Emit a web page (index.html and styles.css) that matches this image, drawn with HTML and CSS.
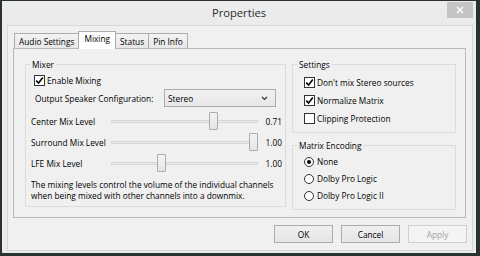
FILE: index.html
```html
<!DOCTYPE html>
<html lang="en">

<head>
    <meta charset="UTF-8">
    <meta name="viewport" content="width=device-width, initial-scale=1.0">
    <link rel="stylesheet" href="styles.css">
    <title>Properties</title>
</head>

<body>
    <div class="window">
        <div class="titlebar">
            <span class="title">Properties</span>
            <span class="close">
                <svg width="8" height="8" viewBox="0 0 8 8">
                    <path d="M1 1 L7 7 M7 1 L1 7" stroke="#fff" stroke-width="1.4" />
                </svg>
            </span>
        </div>
        <div class="client">
            <div class="tabs">
                <div class="tab">Audio Settings</div>
                <div class="tab active">Mixing</div>
                <div class="tab">Status</div>
                <div class="tab">Pin Info</div>
            </div>
            <div class="panel">
                <fieldset class="group mixer">
                    <legend>Mixer</legend>
                    <div class="mixer-body">
                        <label class="check">
                            <span class="box checked">
                                <svg width="9" height="9" viewBox="0 0 9 9">
                                    <path d="M1.2 4.6 L3.6 7 L7.8 1.6" fill="none" stroke="#000" stroke-width="1.6" />
                                </svg>
                            </span>
                            Enable Mixing
                        </label>
                        <div class="config-row">
                            <span>Output Speaker Configuration:</span>
                            <div class="select">
                                <span>Stereo</span>
                                <svg width="7" height="5" viewBox="0 0 7 5">
                                    <path d="M1 1 L3.5 3.5 L6 1" fill="none" stroke="#333" stroke-width="1.2" />
                                </svg>
                            </div>
                        </div>
                        <div class="sliders">
                            <div class="slider-row">
                                <span>Center Mix Level</span>
                                <div class="slider">
                                    <div class="track"></div>
                                    <div class="thumb" style="--pos: 0.71"></div>
                                </div>
                                <span class="value">0.71</span>
                            </div>
                            <div class="slider-row">
                                <span>Surround Mix Level</span>
                                <div class="slider">
                                    <div class="track"></div>
                                    <div class="thumb" style="--pos: 1"></div>
                                </div>
                                <span class="value">1.00</span>
                            </div>
                            <div class="slider-row">
                                <span>LFE Mix Level</span>
                                <div class="slider">
                                    <div class="track"></div>
                                    <div class="thumb" style="--pos: 0.33"></div>
                                </div>
                                <span class="value">1.00</span>
                            </div>
                        </div>
                        <p class="note">The mixing levels control the volume of the individual channels<br>when being mixed with other channels into a downmix.</p>
                    </div>
                </fieldset>
                <div class="right-col">
                    <fieldset class="group settings">
                        <legend>Settings</legend>
                        <div class="option-list">
                            <label class="check">
                                <span class="box checked">
                                    <svg width="9" height="9" viewBox="0 0 9 9">
                                        <path d="M1.2 4.6 L3.6 7 L7.8 1.6" fill="none" stroke="#000" stroke-width="1.6" />
                                    </svg>
                                </span>
                                Don't mix Stereo sources
                            </label>
                            <label class="check">
                                <span class="box checked">
                                    <svg width="9" height="9" viewBox="0 0 9 9">
                                        <path d="M1.2 4.6 L3.6 7 L7.8 1.6" fill="none" stroke="#000" stroke-width="1.6" />
                                    </svg>
                                </span>
                                Normalize Matrix
                            </label>
                            <label class="check">
                                <span class="box"></span>
                                Clipping Protection
                            </label>
                        </div>
                    </fieldset>
                    <fieldset class="group matrix">
                        <legend>Matrix Encoding</legend>
                        <div class="option-list radios">
                            <label class="check"><span class="radio selected"></span>None</label>
                            <label class="check"><span class="radio"></span>Dolby Pro Logic</label>
                            <label class="check"><span class="radio"></span>Dolby Pro Logic II</label>
                        </div>
                    </fieldset>
                </div>
            </div>
            <div class="buttons">
                <button>OK</button>
                <button>Cancel</button>
                <button disabled>Apply</button>
            </div>
        </div>
    </div>
</body>

</html>
```

FILE: styles.css
```css
body {
    margin: 0;
    background: #27332c;
    font-family: "Open Sans", "Noto Sans", sans-serif;
    font-size: 8.3px;
    color: #000;
}

.window {
    margin: 1px 0 0 2px;
    width: 474px;
    height: 252px;
    background: #ebebeb;
    display: flex;
    flex-direction: column;
}

.titlebar {
    height: 24px;
    display: grid;
    grid-template-columns: 1fr auto 1fr;
}

.title {
    grid-column: 2;
    font-size: 11.2px;
    line-height: 24px;
    color: #2b2b2b;
}

.close {
    justify-self: end;
    width: 26px;
    height: 16px;
    margin: 1px 3px 0 0;
    background: #c4c4c4;
    display: flex;
    align-items: center;
    justify-content: center;
}

.client {
    flex: 1;
    margin: 0 3px 2px 5px;
    border: 1px solid #d6d6d6;
    background: #f0f0f0;
    padding: 5px 6px 0 5px;
}

/* tabs */
.tabs {
    display: flex;
    align-items: flex-end;
    height: 17px;
    padding-left: 1px;
}

.tab {
    position: relative;
    box-sizing: border-box;
    height: 15px;
    line-height: 13px;
    padding: 1px 4px 0;
    margin-right: -1px;
    border: 1px solid #acacac;
    border-bottom: 0;
    background: linear-gradient(#f3f3f3, #e7e7e7);
}

.tab.active {
    z-index: 1;
    height: 18px;
    margin-bottom: -1px;
    padding: 0 5px 3px;
    background: #fff;
}

.panel {
    box-sizing: border-box;
    height: 170px;
    border: 1px solid #b9b9b9;
    background: #f0f0f0;
    padding: 10px 9px 10px 11px;
    display: flex;
    gap: 6px;
}

/* group boxes */
.group {
    margin: 0;
    padding: 0;
    min-width: 0;
    border: 1px solid #dcdcdc;
}

.group legend {
    padding: 0 2px;
    margin-left: 4px;
    line-height: 11px;
}

.mixer {
    box-sizing: border-box;
    width: 261px;
}

.mixer-body {
    padding: 5px 3px 0 5px;
}

.check {
    display: flex;
    align-items: center;
    gap: 2px;
    height: 11px;
    line-height: 11px;
}

.mixer-body .check {
    margin-left: 3px;
}

.box {
    box-sizing: border-box;
    width: 11px;
    height: 11px;
    border: 1px solid #333;
    background: #fff;
    display: flex;
    align-items: center;
    justify-content: center;
}

.radio {
    box-sizing: border-box;
    width: 10px;
    height: 10px;
    margin-right: 1px;
    border: 1px solid #333;
    border-radius: 50%;
    background: #fff;
    display: flex;
    align-items: center;
    justify-content: center;
}

.radio.selected::after {
    content: "";
    width: 4px;
    height: 4px;
    border-radius: 50%;
    background: #000;
}

.config-row {
    display: grid;
    grid-template-columns: 129px 112px;
    align-items: center;
    height: 18px;
    margin: 3px 0 0 4px;
}

.select {
    box-sizing: border-box;
    height: 18px;
    border: 1px solid #acacac;
    background: linear-gradient(#f2f2f2, #e6e6e6);
    padding: 0 7px 0 3px;
    display: flex;
    align-items: center;
    justify-content: space-between;
}

.sliders {
    margin-top: 5px;
    display: flex;
    flex-direction: column;
    gap: 3px;
}

.slider-row {
    display: grid;
    grid-template-columns: 80px 147px 1fr;
    align-items: center;
    height: 18px;
}

.slider {
    position: relative;
    height: 18px;
}

.track {
    position: absolute;
    left: 0;
    right: 0;
    top: 8px;
    height: 3px;
    box-sizing: border-box;
    border: 1px solid #d6d6d6;
    background: #e9e9e9;
}

.thumb {
    position: absolute;
    top: 0;
    left: calc(var(--pos) * (100% - 9px));
    box-sizing: border-box;
    width: 9px;
    height: 18px;
    border: 1px solid #acacac;
    border-radius: 1px;
    background: linear-gradient(#f3f3f3, #e5e5e5);
}

.value {
    text-align: right;
}

.note {
    margin: 7px 0 0;
    line-height: 11px;
}

/* right column */
.right-col {
    flex: 1;
    display: flex;
    flex-direction: column;
    gap: 7px;
}

.option-list {
    display: flex;
    flex-direction: column;
    gap: 7px;
    padding: 7px 0 8px 11px;
}

.matrix {
    flex: 1;
}

.option-list.radios {
    gap: 6px;
    padding-top: 5px;
}

/* buttons */
.buttons {
    display: flex;
    justify-content: flex-end;
    gap: 8px;
    margin: 7px -1px 0 0;
}

.buttons button {
    width: 59px;
    height: 18px;
    padding: 0;
    border: 1px solid #acacac;
    background: linear-gradient(#f0f0f0, #e5e5e5);
    font-family: inherit;
    font-size: 8.3px;
    color: #000;
}

.buttons button:disabled {
    border-color: #cfcfcf;
    background: #f4f4f4;
    color: #a0a0a0;
}
```
